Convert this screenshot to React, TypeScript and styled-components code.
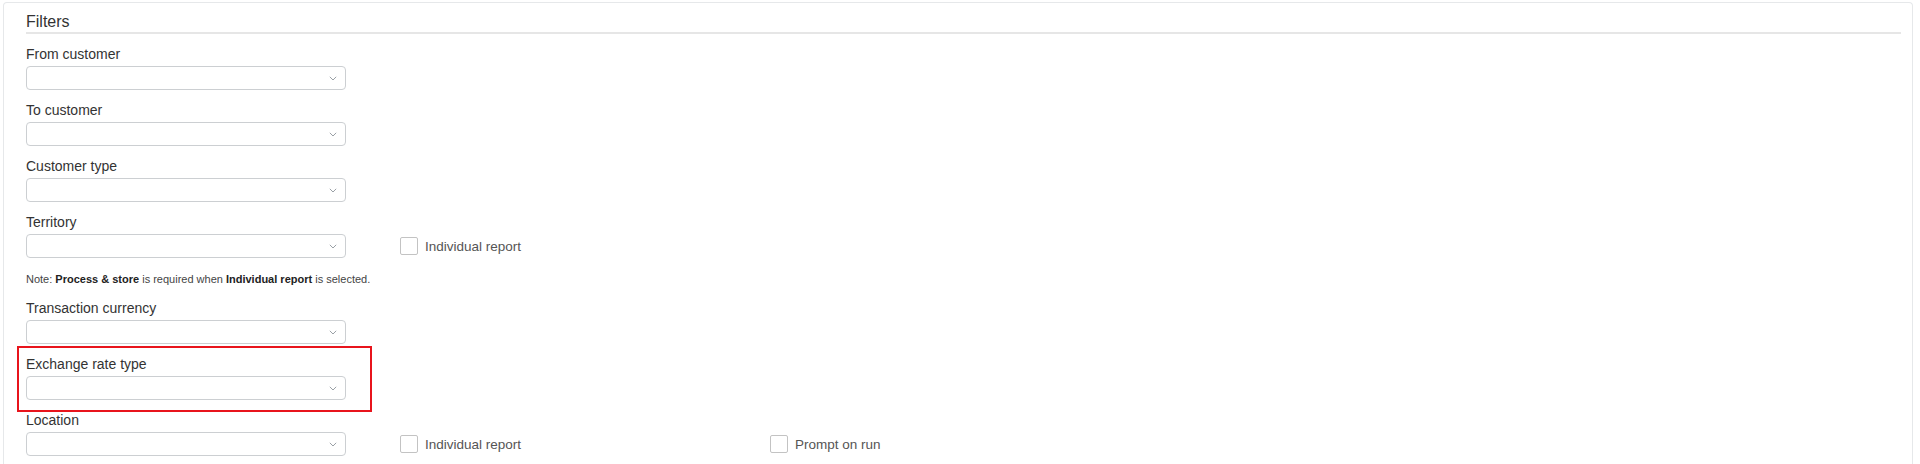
import React from "react";
import styled, { createGlobalStyle } from "styled-components";

const GlobalStyle = createGlobalStyle`
  html, body {
    margin: 0;
    padding: 0;
    background: #ffffff;
    overflow: hidden;
    font-family: "Liberation Sans", Arial, sans-serif;
  }
`;

const Panel = styled.section`
  margin: 2px 7px 0 3px;
  border: 1px solid #e6e8ea;
  border-bottom: none;
  border-radius: 4px 4px 0 0;
  padding: 9px 11px 40px 22px;
  min-height: 600px;
  box-sizing: border-box;
`;

const Heading = styled.h2`
  margin: 0;
  font-size: 16px;
  line-height: 20px;
  font-weight: 400;
  color: #333333;
  border-bottom: 2px solid #e6e6e6;
`;

const Form = styled.div`
  display: flex;
  flex-direction: column;
  margin-top: 12px;
`;

const Row = styled.div<{ $after?: number }>`
  display: flex;
  align-items: flex-end;
  margin-bottom: ${(p) => (p.$after ?? 12)}px;
`;

const Field = styled.div`
  display: flex;
  flex-direction: column;
  width: 320px;
`;

const Highlight = styled.div`
  position: relative;
  &::after {
    content: "";
    position: absolute;
    top: -10px;
    bottom: -12px;
    left: -9px;
    right: -26px;
    border: 2px solid #e8141c;
    pointer-events: none;
  }
`;

const Label = styled.label`
  font-size: 14px;
  line-height: 16px;
  color: #333333;
  margin-bottom: 4px;
`;

const SelectBox = styled.div`
  position: relative;
  height: 24px;
  box-sizing: border-box;
  border: 1px solid #cccfd2;
  border-radius: 4px;
  background: #ffffff;
  display: flex;
  align-items: center;
  justify-content: flex-end;
  padding-right: 8px;
`;

const CheckGroup = styled.label<{ $width?: number }>`
  display: flex;
  align-items: center;
  height: 24px;
  width: ${(p) => p.$width ?? 370}px;
  gap: 7px;
  font-size: 13.5px;
  color: #555555;
`;

const CheckBox = styled.span`
  width: 18px;
  height: 18px;
  box-sizing: border-box;
  border: 1px solid #c3c3c3;
  border-radius: 2px;
  background: #ffffff;
`;

const CheckColumns = styled.div`
  display: flex;
  margin-left: 54px;
`;

const Note = styled.p`
  margin: 0 0 14px;
  font-size: 11px;
  line-height: 13px;
  color: #444444;
  & b {
    color: #222222;
    font-weight: 700;
  }
`;

const Chevron = () => (
  <svg width="8" height="5" viewBox="0 0 8 5" aria-hidden="true">
    <polyline points="0.8,0.8 4,4 7.2,0.8" fill="none" stroke="#9aa0a6" strokeWidth="1" />
  </svg>
);

const Select = ({ label }: { label: string }) => (
  <Field>
    <Label>{label}</Label>
    <SelectBox>
      <Chevron />
    </SelectBox>
  </Field>
);

const Check = ({ text, width }: { text: string; width?: number }) => (
  <CheckGroup $width={width}>
    <CheckBox />
    {text}
  </CheckGroup>
);

export default function App() {
  return (
    <>
      <GlobalStyle />
      <Panel>
        <Heading>Filters</Heading>
        <Form>
          <Row>
            <Select label="From customer" />
          </Row>
          <Row>
            <Select label="To customer" />
          </Row>
          <Row>
            <Select label="Customer type" />
          </Row>
          <Row $after={15}>
            <Select label="Territory" />
            <CheckColumns>
              <Check text="Individual report" />
            </CheckColumns>
          </Row>
          <Note>
            Note: <b>Process &amp; store</b> is required when <b>Individual report</b> is selected.
          </Note>
          <Row>
            <Select label="Transaction currency" />
          </Row>
          <Row>
            <Highlight>
              <Select label="Exchange rate type" />
            </Highlight>
          </Row>
          <Row>
            <Select label="Location" />
            <CheckColumns>
              <Check text="Individual report" />
              <Check text="Prompt on run" />
            </CheckColumns>
          </Row>
        </Form>
      </Panel>
    </>
  );
}
